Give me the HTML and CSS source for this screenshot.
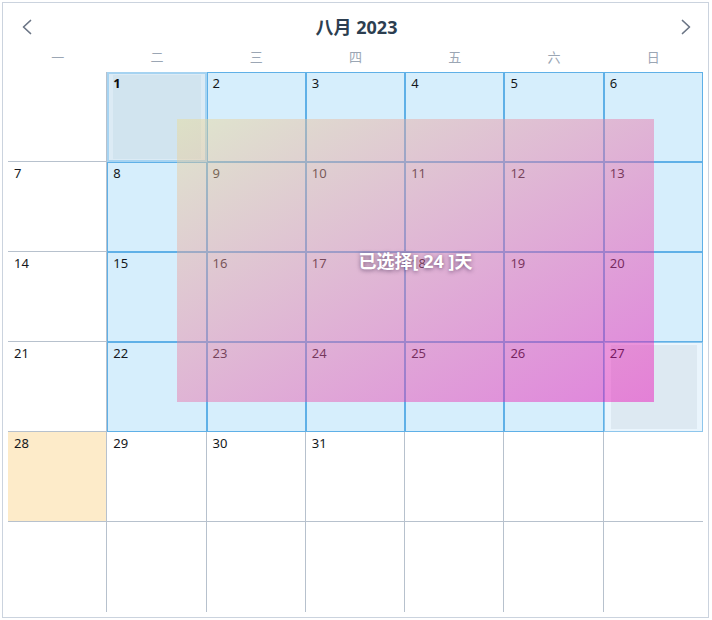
FILE: index.html
```html
<!DOCTYPE html>
<html lang="zh">
<head>
<meta charset="utf-8">
<title>八月 2023</title>
<link rel="stylesheet" href="styles.css">
</head>
<body>
<div class="calendar">
  <div class="title-row">
    <svg class="nav" width="16" height="16" viewBox="0 0 16 16"><path d="M11.5 1.5 L4.5 8 L11.5 14.5" fill="none" stroke="#6b7585" stroke-width="1.7" stroke-linecap="round" stroke-linejoin="round"/></svg>
    <div class="title">八月 2023</div>
    <svg class="nav" width="16" height="16" viewBox="0 0 16 16"><path d="M4.5 1.5 L11.5 8 L4.5 14.5" fill="none" stroke="#6b7585" stroke-width="1.7" stroke-linecap="round" stroke-linejoin="round"/></svg>
  </div>
  <div class="weekdays">
    <div>一</div><div>二</div><div>三</div><div>四</div><div>五</div><div>六</div><div>日</div>
  </div>
  <div class="grid">
    <div class="cell"></div>
    <div class="cell sel start"><span class="num bold">1</span></div>
    <div class="cell sel"><span class="num">2</span></div>
    <div class="cell sel"><span class="num">3</span></div>
    <div class="cell sel"><span class="num">4</span></div>
    <div class="cell sel"><span class="num">5</span></div>
    <div class="cell sel last"><span class="num">6</span></div>

    <div class="cell"><span class="num">7</span></div>
    <div class="cell sel"><span class="num">8</span></div>
    <div class="cell sel"><span class="num">9</span></div>
    <div class="cell sel"><span class="num">10</span></div>
    <div class="cell sel"><span class="num">11</span></div>
    <div class="cell sel"><span class="num">12</span></div>
    <div class="cell sel last"><span class="num">13</span></div>

    <div class="cell"><span class="num">14</span></div>
    <div class="cell sel"><span class="num">15</span></div>
    <div class="cell sel"><span class="num">16</span></div>
    <div class="cell sel"><span class="num">17</span></div>
    <div class="cell sel"><span class="num">18</span></div>
    <div class="cell sel"><span class="num">19</span></div>
    <div class="cell sel last"><span class="num">20</span></div>

    <div class="cell"><span class="num">21</span></div>
    <div class="cell sel"><span class="num">22</span></div>
    <div class="cell sel"><span class="num">23</span></div>
    <div class="cell sel"><span class="num">24</span></div>
    <div class="cell sel"><span class="num">25</span></div>
    <div class="cell sel"><span class="num">26</span></div>
    <div class="cell sel end last"><span class="num">27</span></div>

    <div class="cell today"><span class="num">28</span></div>
    <div class="cell"><span class="num">29</span></div>
    <div class="cell"><span class="num">30</span></div>
    <div class="cell"><span class="num">31</span></div>
    <div class="cell"></div>
    <div class="cell"></div>
    <div class="cell last"></div>

    <div class="cell bottom"></div>
    <div class="cell bottom"></div>
    <div class="cell bottom"></div>
    <div class="cell bottom"></div>
    <div class="cell bottom"></div>
    <div class="cell bottom"></div>
    <div class="cell bottom last"></div>

    <div class="drag-overlay"><span class="drag-label">已选择[ 24 ]天</span></div>
  </div>
</div>
</body>
</html>
```

FILE: styles.css
```css
* { box-sizing: border-box; }

html, body {
  margin: 0;
  padding: 0;
  background: #ffffff;
}

body {
  font-family: "Noto Sans", "Noto Sans CJK SC", sans-serif;
  color: #141820;
}

.calendar {
  margin: 2px 0 0 2px;
  width: 707px;
  height: 616px;
  border: 1px solid #cbd3de;
  padding: 0 5px 5px 5px;
  display: flex;
  flex-direction: column;
}

.title-row {
  height: 46px;
  padding: 2px 9px 0 11px;
  display: flex;
  align-items: center;
  justify-content: space-between;
}

.nav { display: block; }

.title {
  font-family: "Noto Sans", "Noto Sans CJK SC", sans-serif;
  font-weight: 700;
  font-size: 18px;
  color: #2c3e50;
  line-height: 24px;
}

.weekdays {
  height: 23px;
  display: grid;
  grid-template-columns: repeat(7, 1fr);
  font-family: "Noto Sans CJK SC", sans-serif;
  font-size: 13px;
  line-height: 16px;
  color: #9ba6b4;
  text-align: center;
}

.grid {
  position: relative;
  display: grid;
  grid-template-columns: repeat(7, 1fr);
  grid-template-rows: repeat(6, 90px);
}

.cell {
  position: relative;
  border-right: 1px solid #b7c1cd;
  border-bottom: 1px solid #b7c1cd;
  padding: 3px 6px 0 6px;
  font-size: 13px;
  line-height: 17px;
}

.cell.last { border-right: none; }
.cell.bottom { border-bottom: none; }

.cell.sel {
  border: 1px solid #5fb0e7;
  background: #d6eefc;
  padding: 2px 5px 0 5px;
}

.cell.start {
  border: 2px solid #a6d3f1;
  background: #dcebf5;
  padding: 1px 4px 0 4px;
}

.cell.start::before {
  content: "";
  position: absolute;
  top: 1px;
  left: 4px;
  right: 4px;
  bottom: 1px;
  background: #d1e4ef;
}

.cell.end {
  border: 1px solid #8ec6ec;
  background: #eaf5fd;
}

.cell.end::before {
  content: "";
  position: absolute;
  top: 2px;
  left: 6px;
  right: 5px;
  bottom: 2px;
  background: #dde9f2;
}

.cell.today {
  background: #fdebc9;
}

.num {
  position: relative;
  z-index: 1;
  color: #141820;
}

.num.bold { font-weight: 700; color: #0d0d0d; }

.drag-overlay {
  position: absolute;
  left: 169px;
  top: 47px;
  width: 477px;
  height: 283px;
  z-index: 2;
  background: linear-gradient(to bottom right, rgba(234, 220, 148, 0.45), rgba(236, 0, 182, 0.45));
  display: flex;
  align-items: center;
  justify-content: center;
}

.drag-label {
  font-family: "Noto Sans", "Noto Sans CJK SC", sans-serif;
  font-weight: 700;
  font-size: 18px;
  line-height: 22px;
  color: #ffffff;
  white-space: pre;
  text-shadow: 0 1px 4px rgba(40, 20, 60, 0.6);
}
```
